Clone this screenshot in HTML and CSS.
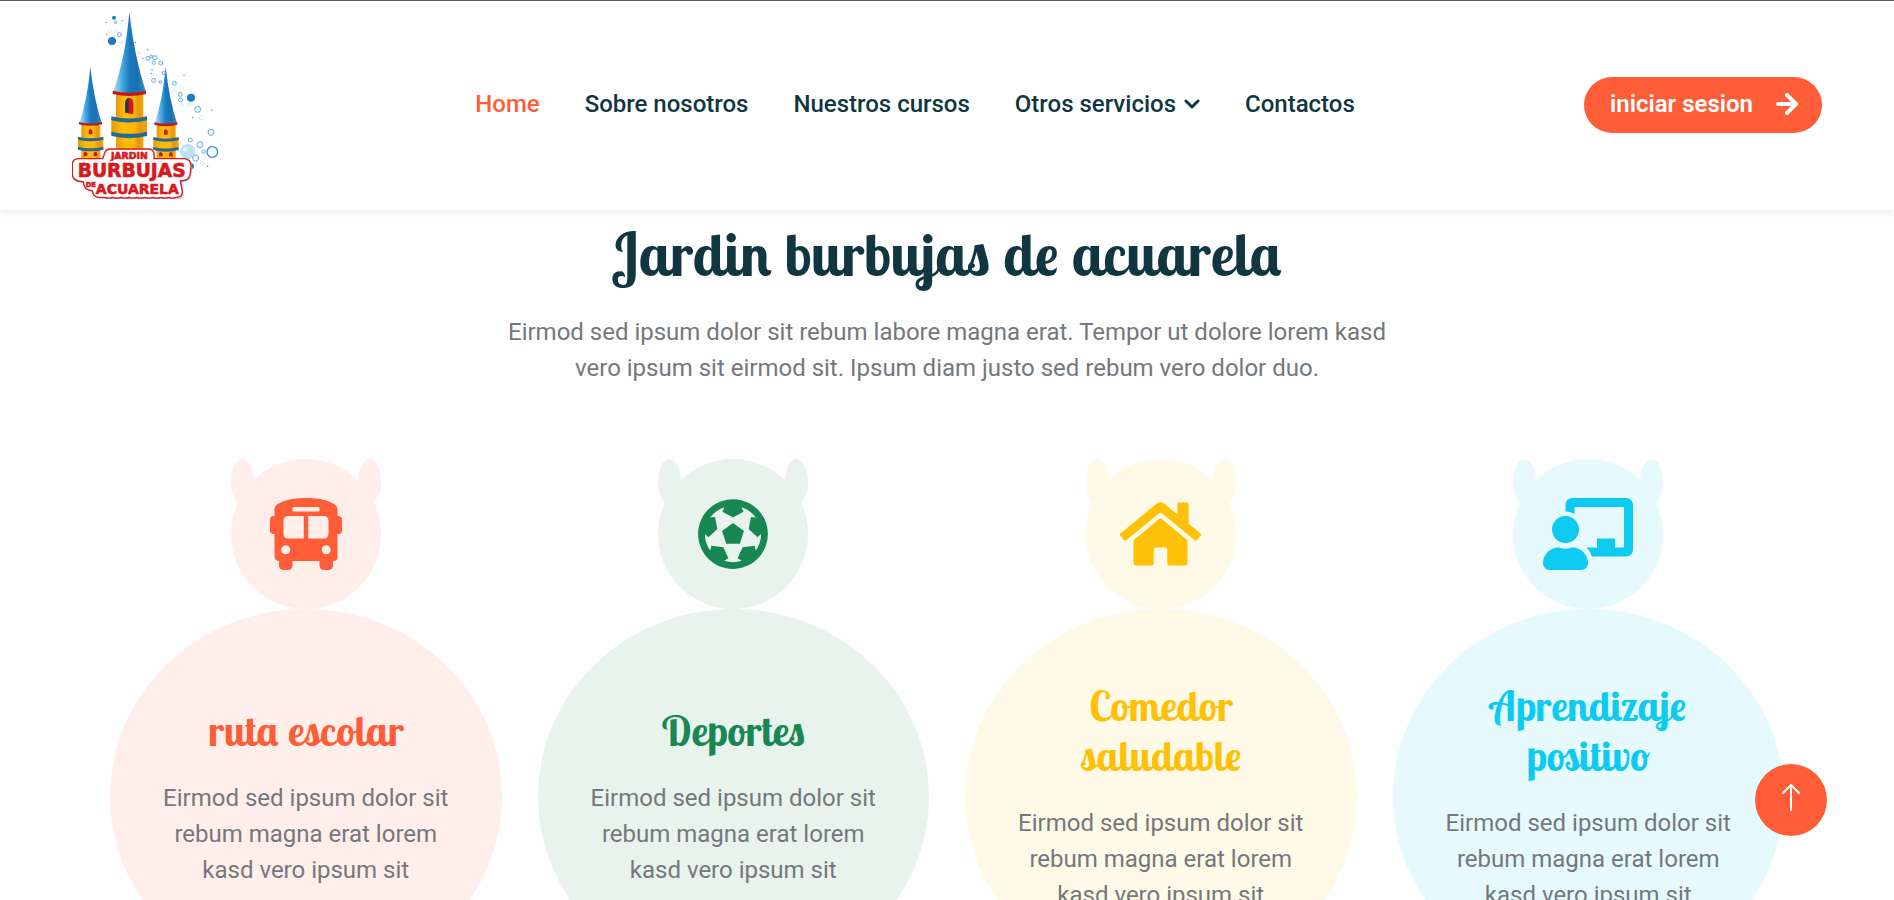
FILE: index.html
```html
<!DOCTYPE html>
<html lang="es">
<head>
<meta charset="utf-8">
<meta name="viewport" content="width=device-width, initial-scale=1">
<title>Jardin burbujas de acuarela</title>
<link rel="stylesheet" href="styles.css">
</head>
<body>
<header class="navbar">
  <a class="brand" href="#" aria-label="Jardin Burbujas de Acuarela">
    <svg class="logo" viewBox="66 24 450 582" role="img" aria-label="Jardin Burbujas de Acuarela">
      <defs>
        <linearGradient id="roof" x1="0" x2="1" y1="0" y2="0">
          <stop offset="0" stop-color="#c4e4f6"/><stop offset=".28" stop-color="#45a9df"/><stop offset=".5" stop-color="#1c79bd"/><stop offset=".75" stop-color="#1b6fb0"/><stop offset="1" stop-color="#3f93bd"/>
        </linearGradient>
        <linearGradient id="wall" x1="0" x2="1" y1="0" y2="0">
          <stop offset="0" stop-color="#e8980c"/><stop offset=".3" stop-color="#fdbb0a"/><stop offset=".65" stop-color="#fdb909"/><stop offset=".8" stop-color="#e5980f"/><stop offset="1" stop-color="#f0a50c"/>
        </linearGradient>
        <g id="side-tower">
          <path d="M121 200Q132 300 155 368Q121 378 88 368Q112 300 121 200Z" fill="url(#roof)"/>
          <path d="M94 374H151V485H94Z" fill="url(#wall)"/>
          <path d="M87 366Q121 375 156 366V373Q121 382 87 373Z" fill="#c5161d"/>
          <rect x="84" y="414" width="76" height="34" fill="url(#wall)"/>
          <path d="M84 410Q121 420 160 410V419Q121 429 84 419ZM84 440Q121 449 160 440V449Q121 459 84 449Z" fill="#236b92"/>
          <path d="M116 403V392Q121 382 127 392V403ZM101 468V460Q106 450 112 460V468ZM131 468V460Q136 450 142 460V468Z" fill="#c5161d"/>
        </g>
      </defs>
      <use href="#side-tower"/>
      <use href="#side-tower" x="226" y="1"/>
      <path d="M238 36Q254 176 288 275Q238 288 189 275Q226 176 238 36Z" fill="url(#roof)"/>
      <path d="M198 283H280V455H198Z" fill="url(#wall)"/>
      <path d="M188 272Q238 284 288 272V282Q238 294 188 282Z" fill="#c5161d"/>
      <path d="M225 338V308Q229 293 238 293Q248 295 250 308V343Z" fill="#d7151d"/>
      <path d="M225 337V308Q228 296 236 294V338Z" fill="#303641"/>
      <rect x="184" y="356" width="107" height="48" fill="url(#wall)"/>
      <path d="M184 349Q238 362 291 349V361Q238 374 184 361ZM184 395Q238 408 291 395V408Q238 421 184 408Z" fill="#236b92"/>
      <g fill="#187dc3">
        <circle cx="186" cy="123" r="12"/><circle cx="192" cy="53" r="6"/><circle cx="423" cy="293" r="12"/><circle cx="423" cy="499" r="9"/>
        <circle cx="169" cy="67" r="2"/><circle cx="217" cy="62" r="2"/><circle cx="170" cy="103" r="2"/><circle cx="256" cy="127" r="2"/><circle cx="293" cy="149" r="2"/><circle cx="278" cy="175" r="2"/><circle cx="306" cy="209" r="2"/><circle cx="304" cy="220" r="2"/><circle cx="402" cy="226" r="2"/><circle cx="485" cy="330" r="2"/><circle cx="428" cy="352" r="2"/><circle cx="473" cy="499" r="2"/><circle cx="332" cy="247" r="2"/>
      </g>
      <circle cx="413" cy="455" r="23" fill="#bbe1f6"/><circle cx="405" cy="448" r="7" fill="#e1f3fc"/>
      <g fill="#f2f9fd" stroke="#64aee0" stroke-width="3">
        <circle cx="197" cy="67" r="4"/><circle cx="208" cy="104" r="6"/><circle cx="294" cy="175" r="6"/><circle cx="304" cy="169" r="4"/><circle cx="315" cy="173" r="6"/><circle cx="311" cy="188" r="5"/><circle cx="332" cy="189" r="6"/><circle cx="341" cy="219" r="5"/><circle cx="311" cy="241" r="6"/><circle cx="331" cy="246" r="4"/><circle cx="373" cy="250" r="6"/><circle cx="391" cy="283" r="6"/><circle cx="392" cy="300" r="6"/><circle cx="443" cy="328" r="9"/><circle cx="483" cy="397" r="9"/><circle cx="421" cy="420" r="6"/><circle cx="450" cy="434" r="9"/><circle cx="437" cy="474" r="9"/><circle cx="461" cy="455" r="5"/>
      </g>
      <circle cx="487" cy="456" r="16" fill="#f4fbff" stroke="#3990cd" stroke-width="4"/>
      <g fill="none" stroke="#c7dce5" stroke-width="2">
        <circle cx="180" cy="93" r="5"/><circle cx="197" cy="94" r="4"/><circle cx="214" cy="127" r="4"/><circle cx="266" cy="160" r="4"/><circle cx="395" cy="264" r="5"/><circle cx="396" cy="315" r="5"/><circle cx="371" cy="272" r="4"/><circle cx="453" cy="353" r="6"/><circle cx="456" cy="490" r="5"/><circle cx="418" cy="312" r="3"/>
      </g>
      <path transform="translate(4 5)" fill="#c9cfcd" d="M180 447H294Q311 447 312 462V476H403Q425 478 423 502L420 524Q417 542 391 543L397 573Q400 592 378 592H148Q129 592 127 572Q101 570 100 545Q69 545 67 524V492Q68 476 88 476H158L164 459Q168 447 180 447Z"/>
      <path fill="#fff" stroke="#d71920" stroke-width="4" stroke-linejoin="round" d="M180 447H294Q311 447 312 462V476H403Q425 478 423 502L420 524Q417 542 391 543L397 573Q399 592 378 592Q367 597 357 592Q345 597 333 592Q321 597 309 592Q297 597 285 592Q273 597 261 592Q249 597 237 592Q225 597 213 592Q201 597 189 592Q177 597 165 592H148Q129 592 127 572Q101 570 100 545Q69 545 67 524V492Q68 476 88 476H158L164 459Q168 447 180 447Z"/>
      <g class="logo-text">
        <text x="238" y="478" font-size="28">JARDIN</text>
        <text x="245" y="532" font-size="56">BURBUJAS</text>
        <text x="122" y="560" font-size="20">DE</text>
        <text x="262" y="581" font-size="42">ACUARELA</text>
      </g>
    </svg>
  </a>
  <nav class="menu" aria-label="Principal">
    <a class="menu-link active" href="#">Home</a>
    <a class="menu-link" href="#">Sobre nosotros</a>
    <a class="menu-link" href="#">Nuestros cursos</a>
    <a class="menu-link" href="#">Otros servicios
      <svg class="chevron" viewBox="0 0 16 10" aria-hidden="true"><path d="M2 2l6 6 6-6"/></svg>
    </a>
    <a class="menu-link" href="#">Contactos</a>
  </nav>
  <a class="login" href="#">iniciar sesion
    <svg class="login-arrow" viewBox="0 0 22 22" aria-hidden="true"><path d="M2 11h17M11 2l9 9-9 9"/></svg>
  </a>
</header>

<main class="container">
  <section class="intro">
    <h1 class="title">Jardin burbujas de acuarela</h1>
    <p class="lead">Eirmod sed ipsum dolor sit rebum labore magna erat. Tempor ut dolore lorem kasd vero ipsum sit eirmod sit. Ipsum diam justo sed rebum vero dolor duo.</p>
  </section>

  <section class="facilities">
    <article class="facility orange">
      <div class="facility-icon">
        <svg viewBox="0 0 512 512" aria-hidden="true"><path d="M488 128h-8V80c0-44.800-99.200-80-224-80S32 35.200 32 80v48h-8c-13.250 0-24 10.740-24 24v80c0 13.250 10.750 24 24 24h8v160c0 17.670 14.330 32 32 32v32c0 17.670 14.330 32 32 32h32c17.670 0 32-14.330 32-32v-32h192v32c0 17.670 14.330 32 32 32h32c17.670 0 32-14.330 32-32v-32h6.400c16 0 25.600-12.800 25.600-25.600V256h8c13.250 0 24-10.750 24-24v-80c0-13.260-10.750-24-24-24zM160 72c0-4.420 3.580-8 8-8h176c4.420 0 8 3.580 8 8v16c0 4.420-3.580 8-8 8H168c-4.420 0-8-3.580-8-8V72zm-48 328c-17.670 0-32-14.330-32-32s14.330-32 32-32 32 14.330 32 32-14.330 32-32 32zm128-112H128c-17.670 0-32-14.330-32-32v-96c0-17.670 14.330-32 32-32h112v160zm32 0V128h112c17.670 0 32 14.330 32 32v96c0 17.670-14.330 32-32 32H272zm128 112c-17.670 0-32-14.330-32-32s14.330-32 32-32 32 14.330 32 32-14.330 32-32 32z"/></svg>
      </div>
      <div class="facility-text">
        <h3>ruta escolar</h3>
        <p>Eirmod sed ipsum dolor sit rebum magna erat lorem kasd vero ipsum sit</p>
      </div>
    </article>
    <article class="facility green">
      <div class="facility-icon">
        <svg viewBox="0 0 512 512" aria-hidden="true"><path d="M504 256c0 136.967-111.033 248-248 248S8 392.967 8 256 119.033 8 256 8s248 111.033 248 248zm-48 0l-.003-.282-26.064 22.741-62.679-58.500 16.454-84.355 34.303 3.072c-24.889-34.216-60.004-60.089-100.709-73.141l13.651 31.939L256 139l-74.953-41.525 13.651-31.939c-40.631 13.028-75.780 38.870-100.709 73.141l34.565-3.073 16.192 84.355-62.678 58.500-26.064-22.741-.003.282c0 43.015 13.497 83.952 38.472 117.991l7.704-33.897 85.138 10.447 36.301 77.826-29.902 17.786c40.202 13.122 84.290 13.148 124.572 0l-29.902-17.786 36.301-77.826 85.138-10.447 7.704 33.897C442.503 339.952 456 299.015 456 256zm-248.102 69.571l-29.894-91.312L256 177.732l77.996 56.527-29.622 91.312h-96.476z"/></svg>
      </div>
      <div class="facility-text">
        <h3>Deportes</h3>
        <p>Eirmod sed ipsum dolor sit rebum magna erat lorem kasd vero ipsum sit</p>
      </div>
    </article>
    <article class="facility yellow">
      <div class="facility-icon">
        <svg viewBox="0 0 576 512" aria-hidden="true"><path d="M280.370 148.260L96 300.110V464a16 16 0 0 0 16 16l112.060-.290a16 16 0 0 0 15.920-16V368a16 16 0 0 1 16-16h64a16 16 0 0 1 16 16v95.640a16 16 0 0 0 16 16.050L464 480a16 16 0 0 0 16-16V300L295.670 148.260a12.190 12.190 0 0 0-15.300 0zM571.600 251.470L488 182.560V44.050a12 12 0 0 0-12-12h-56a12 12 0 0 0-12 12v72.610L318.470 43a48 48 0 0 0-61 0L4.340 251.470a12 12 0 0 0-1.600 16.900l25.500 31A12 12 0 0 0 45.150 301l235.220-193.740a12.190 12.190 0 0 1 15.300 0L530.900 301a12 12 0 0 0 16.900-1.600l25.500-31a12 12 0 0 0-1.700-16.930z"/></svg>
      </div>
      <div class="facility-text">
        <h3>Comedor saludable</h3>
        <p>Eirmod sed ipsum dolor sit rebum magna erat lorem kasd vero ipsum sit</p>
      </div>
    </article>
    <article class="facility cyan">
      <div class="facility-icon">
        <svg viewBox="0 0 640 512" aria-hidden="true"><path d="M208 352c-2.390 0-4.780.350-7.060 1.090C187.980 357.300 174.350 360 160 360c-14.350 0-27.980-2.700-40.950-6.910-2.280-.740-4.660-1.090-7.050-1.090C49.940 352-.330 402.480 0 464.620.140 490.880 21.730 512 48 512h224c26.270 0 47.860-21.120 48-47.380.330-62.140-49.940-112.620-112-112.620zm-48-32c53.020 0 96-42.980 96-96s-42.980-96-96-96-96 42.980-96 96 42.980 96 96 96zM592 0H208c-26.470 0-48 22.250-48 49.590V96c23.420 0 45.100 6.780 64 17.800V64h352v288h-64v-64H384v64h-76.240c19.100 16.690 33.120 38.730 39.690 64H592c26.470 0 48-22.250 48-49.590V49.590C640 22.250 618.470 0 592 0z"/></svg>
      </div>
      <div class="facility-text">
        <h3>Aprendizaje positivo</h3>
        <p>Eirmod sed ipsum dolor sit rebum magna erat lorem kasd vero ipsum sit</p>
      </div>
    </article>
  </section>
</main>

<a class="back-to-top" href="#" aria-label="Volver arriba">
  <svg viewBox="0 0 36 36" aria-hidden="true"><path d="M18 28V3M10 11l8-8 8 8"/></svg>
</a>
</body>
</html>
```
FILE: styles.css
```css
*, *::before, *::after { box-sizing: border-box; }

html { scrollbar-width: none; }

body {
  margin: 0;
  background: #fefefe;
  color: #74787c;
  font: 400 24px/36px Roboto, "Liberation Sans", sans-serif;
}

a { color: inherit; text-decoration: none; }
h1, h3, p { margin: 0; }

.navbar {
  position: sticky;
  top: 0;
  z-index: 2;
  display: flex;
  align-items: center;
  padding: 7px 72px 8px;
  border-top: 1px solid #5b5b5f;
  background: #fff;
  box-shadow: 0 3px 6px rgba(16, 55, 65, .08);
}

.brand { display: block; margin-right: 24px; }
.logo { display: block; width: 150px; height: 194px; }
.logo-text {
  fill: #d71920;
  stroke: #d71920;
  stroke-width: 2;
  stroke-linejoin: round;
  font-family: "DejaVu Sans", sans-serif;
  font-weight: 700;
  text-anchor: middle;
}

.menu { display: flex; gap: 45px; margin: 0 auto; padding-bottom: 2px; }
.menu-link {
  display: flex;
  align-items: center;
  gap: 8px;
  color: #103741;
  font-weight: 500;
}
.menu-link.active { color: #fe5d37; }

.chevron { width: 16px; height: 10px; }
.chevron path, .login-arrow path, .back-to-top path {
  fill: none;
  stroke: currentColor;
  stroke-linecap: round;
  stroke-linejoin: round;
}
.chevron path { stroke-width: 3; }

.login {
  display: flex;
  align-items: center;
  gap: 23px;
  padding: 9px 24px 11px 26px;
  border-radius: 28px;
  background: #fe5d37;
  color: #fff;
  font-weight: 600;
}
.login-arrow { width: 22px; height: 22px; }
.login-arrow path { stroke-width: 4; }

.container {
  max-width: 1710px;
  margin: 0 auto;
  padding: 8px 18px 72px;
}

.intro { max-width: 900px; margin: 0 auto 73px; text-align: center; }

.title, .facility h3 {
  font-family: "Lobster Two", "Liberation Serif", serif;
  font-weight: 700;
}
.title {
  margin-bottom: 24px;
  color: #103741;
  font-size: 60px;
  line-height: 72px;
}

.facilities {
  display: grid;
  grid-template-columns: repeat(4, minmax(0, 1fr));
  gap: 36px;
}

.facility { color: var(--tone); }
.orange { --tone: #fe5d37; --pale: #ffeeea; }
.green { --tone: #198754; --pale: #e8f3ed; }
.yellow { --tone: #ffc107; --pale: #fff9e7; }
.cyan { --tone: #0dcaf0; --pale: #e6fafe; }

.facility-icon {
  position: relative;
  display: flex;
  align-items: center;
  justify-content: center;
  width: 150px;
  height: 150px;
  margin: 0 auto;
  border-radius: 50%;
  background: var(--pale);
}
.facility-icon::before, .facility-icon::after {
  content: "";
  position: absolute;
  top: 0;
  width: 23px;
  height: 46px;
  border-radius: 50%;
  background: var(--pale);
}
.facility-icon::before { left: 0; }
.facility-icon::after { right: 0; }
.facility-icon svg { height: 72px; fill: currentColor; }

.facility-text {
  display: flex;
  flex-direction: column;
  justify-content: center;
  gap: 24px;
  aspect-ratio: 391 / 375;
  padding: 0 48px;
  border-radius: 50%;
  background: var(--pale);
  text-align: center;
}
.facility h3 { padding: 0 30px; font-size: 42px; line-height: 50px; }
.facility p { color: #74787c; }

.back-to-top {
  position: fixed;
  right: 67px;
  bottom: 64px;
  z-index: 3;
  display: grid;
  place-items: center;
  width: 72px;
  height: 72px;
  border-radius: 50%;
  background: #fe5d37;
  color: #fff;
}
.back-to-top svg { width: 36px; height: 36px; }
.back-to-top path { stroke-width: 2; }
```
